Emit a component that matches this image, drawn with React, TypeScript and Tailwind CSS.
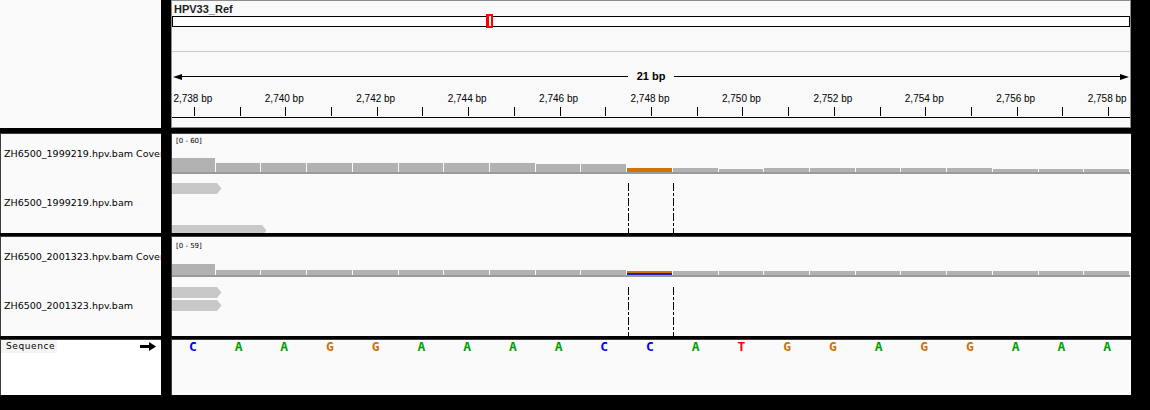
import React from 'react'

const BASES = 'CAAGGAAAACCATGGAGGAAA'.split('')
const BASE_COLOR: Record<string, string> = {
  A: 'text-[#00a000]',
  C: 'text-[#0000ff]',
  G: 'text-[#d17105]',
  T: 'text-[#ff0000]',
}
const START = 2738
const COLS = 'grid w-[960px] grid-cols-[repeat(21,minmax(0,1fr))]'

// coverage bar heights in px, one per base
const COV1 = [14, 9, 9, 9, 9, 9, 9, 9, 8, 8, 4, 4, 3, 4, 4, 4, 4, 4, 3, 3, 3]
const COV2 = [11, 5, 5, 5, 5, 5, 5, 5, 5, 5, 4, 4, 4, 4, 4, 4, 4, 4, 4, 4, 4]

function Read({ w, className = '' }: { w: number; className?: string }) {
  return (
    <svg width={w + 5} height={11} className={'block ' + className}>
      <polygon points={`0,0 ${w},0 ${w + 4.5},5.5 ${w},11 0,11`} fill="#c8c8c8" />
    </svg>
  )
}

function CenterLines({ top }: { top: number }) {
  return (
    <svg width={960} height={60} className="pointer-events-none absolute left-0 top-0">
      {[458.5, 503.5].map((x) => (
        <line key={x} x1={x} x2={x} y1={top} y2={60} stroke="#000" strokeWidth={1} strokeDasharray="8 2 3 2" />
      ))}
    </svg>
  )
}

function Ruler() {
  return (
    <div className="flex h-[128px] w-[960px] flex-col overflow-hidden border border-[#8c8c8c] bg-[#f9f9f9]">
      <div className="h-[15px] pl-[2px] pt-[2px] font-['Liberation_Sans',sans-serif] text-[11px] leading-[12px] font-bold text-[#222]">
        HPV33_Ref
      </div>
      <div className="relative h-[11px] border border-black bg-white">
        <div className="absolute left-[313px] top-[-3px] flex h-[14px] w-[7px] items-center justify-center bg-[#ff0000]">
          <div className="h-[10px] w-[2px] bg-white" />
        </div>
      </div>
      <div className="mt-[24px] h-px bg-[#c8c8c8]" />
      <div className="mt-[18px] flex h-[13px] items-center px-px">
        <svg width={9} height={6} className="block">
          <polygon points="0,3 9,0 9,6" fill="#000" />
        </svg>
        <div className="h-px flex-1 bg-black" />
        <span className="px-[9px] font-['Liberation_Sans',sans-serif] text-[11px] leading-[13px] font-bold text-black">21 bp</span>
        <div className="h-px flex-1 bg-black" />
        <svg width={9} height={6} className="block">
          <polygon points="9,3 0,0 0,6" fill="#000" />
        </svg>
      </div>
      <div className={'-ml-[2px] mt-[10px] h-[12px] ' + COLS}>
        {BASES.map((_, i) => (
          <div key={i} className="flex justify-center whitespace-nowrap font-['Liberation_Sans',sans-serif] text-[10px] leading-[12px] text-black">
            {i % 2 === 0 ? `${(START + i).toLocaleString('en-US')} bp` : ''}
          </div>
        ))}
      </div>
      <div className={'-ml-[2px] mt-[2px] h-[9px] ' + COLS}>
        {BASES.map((_, i) => (
          <div key={i} className="flex justify-center">
            <div className="ml-[3px] h-full w-px bg-black" />
          </div>
        ))}
      </div>
      <div className="mt-px h-px bg-black" />
    </div>
  )
}

function Track({
  name,
  range,
  cov,
  labelPad,
  readPad,
  reads,
  mixed,
}: {
  name: string
  range: string
  cov: number[]
  labelPad: string
  readPad: string
  reads: React.ReactNode
  mixed?: boolean
}) {
  return (
    <div className="flex h-[100px] gap-[10px]">
      <div className="flex w-[161px] flex-col overflow-hidden border-t border-l border-[#3c3c3c] bg-[#fafafa] text-[9.5px] text-black">
        <div className="flex h-[40px] items-center whitespace-nowrap pl-[3px]">{name} Coverage</div>
        <div className="flex flex-1 items-center whitespace-nowrap pl-[3px]">{name}</div>
      </div>
      <div className="w-[960px] overflow-hidden border-t border-l border-[#3c3c3c] bg-[#fafafa]">
        <div className="-ml-[2px] flex h-full w-[960px] flex-col">
          <div className={'flex h-[40px] flex-col ' + labelPad}>
            <div className="h-[8px] pl-[6px] text-[7px] leading-[8px] text-black">{range}</div>
            <div className={'flex-1 items-end ' + COLS}>
              {cov.map((h, i) =>
                i === 10 ? (
                  mixed ? (
                    <div key={i} className="mr-px flex flex-col">
                      <div className="h-[2px] bg-[#d27305]" />
                      <div className="h-[2px] bg-[#1c1cc8]" />
                    </div>
                  ) : (
                    <div key={i} className="mr-px bg-[#d27305]" style={{ height: h }} />
                  )
                ) : (
                  <div key={i} className="mr-px bg-[#b2b2b2]" style={{ height: h }} />
                )
              )}
            </div>
            <div className="h-[2px] bg-[#9a9a9a]" />
          </div>
          <div className={'relative flex-1 overflow-hidden ' + readPad}>
            {reads}
            <CenterLines top={readPad === 'pt-[9px]' ? 9 : 10} />
          </div>
        </div>
      </div>
    </div>
  )
}

export default function App() {
  return (
    <div className="flex h-[410px] w-[1150px] flex-col overflow-hidden bg-black font-['DejaVu_Sans',sans-serif]">
      <div className="flex h-[128px] gap-[10px]">
        <div className="w-[161px] bg-[#f9f9f9]" />
        <Ruler />
      </div>

      <div className="mt-[5px]">
        <Track
          name="ZH6500_1999219.hpv.bam"
          range="[0 - 60]"
          cov={COV1}
          labelPad="pt-[3px]"
          readPad="pt-[9px]"
          reads={
            <>
              <Read w={47} />
              <Read w={92} className="mt-[31px]" />
            </>
          }
        />
      </div>

      <div className="mt-[3px]">
        <Track
          name="ZH6500_2001323.hpv.bam"
          range="[0 - 59]"
          cov={COV2}
          labelPad="pt-[5px]"
          readPad="pt-[10px]"
          mixed
          reads={
            <>
              <Read w={47} />
              <Read w={47} className="mt-[2px]" />
            </>
          }
        />
      </div>

      <div className="mt-[3px] flex h-[56px] gap-[10px]">
        <div className="w-[161px] border-t border-l border-[#3c3c3c] bg-white">
          <div className="flex h-[13px] items-center pr-[5px]">
            <span className="flex h-full items-center bg-[#f4f4f4] pl-[5px] pr-[2px] text-[9px] tracking-[0.6px] text-black">
              Sequence
            </span>
            <svg width={16} height={9} className="ml-auto block">
              <rect x={0} y={3} width={10} height={3} fill="#000" />
              <polygon points="9,0 16,4.5 9,9" fill="#000" />
            </svg>
          </div>
        </div>
        <div className="w-[960px] overflow-hidden border-t border-l border-[#3c3c3c] bg-[#fafafa]">
          <div className={'-ml-[2px] pt-[1px] ' + COLS}>
            {BASES.map((b, i) => (
              <div
                key={i}
                className={
                  "flex justify-center font-['DejaVu_Sans_Mono',monospace] text-[13px] leading-[12px] font-bold " +
                  BASE_COLOR[b]
                }
              >
                {b}
              </div>
            ))}
          </div>
        </div>
      </div>
    </div>
  )
}
